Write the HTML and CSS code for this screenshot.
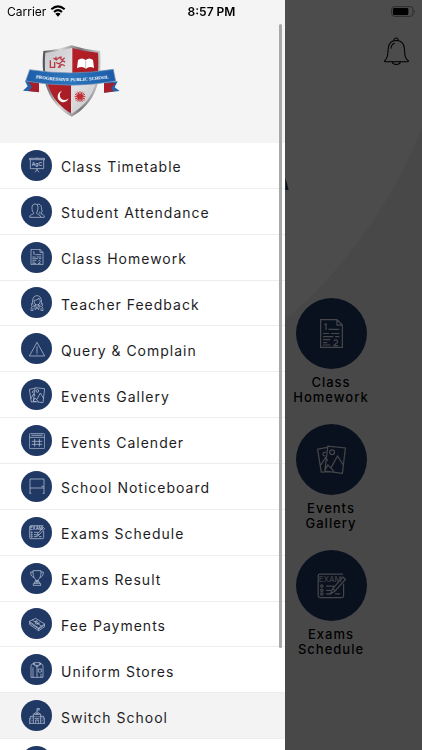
FILE: index.html
```html
<!DOCTYPE html>
<html lang="en">
<head>
<meta charset="utf-8">
<meta name="viewport" content="width=device-width, initial-scale=1">
<title>Progressive Public School</title>
<link rel="stylesheet" href="styles.css">
</head>
<body>
<svg class="sprite" aria-hidden="true">
  <symbol id="timetable" viewBox="0 0 48 48"><path d="M1 4h46v4H1zM4 8v27h40V8M24 35v4M24 38l-6 8M24 38l6 8M24 1v3"/><text x="24" y="27" font-size="15" text-anchor="middle">AgC</text></symbol>
  <symbol id="students" viewBox="0 0 48 48"><path d="M2 43c0-7 3-7 10-10 3-1 2-4 0-6-3-4-3-9-3-14 0-6 4-10 9-10s9 4 9 10c0 6-1 10-3 14-2 3-2 5 1 6 6 3 10 4 10 10zM24 5c3-2 6-2 9 0 6 3 3 12 6 19 1 3-1 4-3 4-1 3 0 4 3 5 5 2 7 5 7 10H35M32 26c-2 3-1 5 2 7"/></symbol>
  <symbol id="homework" viewBox="0 0 48 48"><path d="M6 1h27l9 9v37H6zM33 1v9h9M19 17h18M10 24h10M23 24h14M10 29h17M30 29h7M10 34h12M10 39h7M10 43h12"/><path d="M12 10l3-2v10M28 37c1-4 7-3 6 1 0 2-5 3-6 6h7"/></symbol>
  <symbol id="teacher" viewBox="0 0 48 48"><path d="M12 29C9 23 9 2 24 2s15 21 12 27M15 16c6 0 13-3 15-7 0 5 2 7 4 8-1 9-5 13-10 13s-9-5-9-14zM19 28v5l5 5 5-5v-5M19 31l-9 4c-4 2-4 7-4 12h6V39M29 31l9 4c4 2 4 7 4 12h-6V39M17 34l2 10 5-6 5 6 2-10M9 24c-3 4 0 8-2 10M39 24c3 4 0 8 2 10"/></symbol>
  <symbol id="alert" viewBox="0 0 48 48"><path d="M24 4L1 45h46zM24 16v20M24 38v3"/></symbol>
  <symbol id="gallery" viewBox="0 0 48 48"><path d="M18 2l29 3-5 42-29-4zM17 4L1 7l6 38 14-1M13 42l5-9 5 5 11-20 10 16M23 38l5 6M5 35l9-14 4 5"/><circle cx="25" cy="12" r="4"/><path d="M15 12c-6-2-7 7-1 6"/></symbol>
  <symbol id="calendar" viewBox="0 0 48 48"><path d="M4 2h40q3 0 3 3v39q0 3-3 3H4q-3 0-3-3V5q0-3 3-3zM1 13h46M7 7h34M17 18v23M31 18v23M8 25h32M8 34h32"/></symbol>
  <symbol id="notice" viewBox="0 0 48 48"><path d="M3 3h42v27H3zM3 30v15M45 30v15M1 46h6M41 46h6M37 25h7"/></symbol>
  <symbol id="exam" viewBox="0 0 48 48"><path d="M35 44H5q-3 0-3-3V8q0-3 3-3h38M44 21v20q0 3-3 3h-7M15 25h13M15 32h8M15 38h6M30 38h8M22 38l4-9 17-19 4 4-17 19zM26 29l4 4"/><circle cx="8" cy="25" r="2"/><circle cx="8" cy="32" r="2"/><circle cx="8" cy="38" r="2"/><text x="22" y="19" font-size="13" text-anchor="middle">EXAM</text></symbol>
  <symbol id="trophy" viewBox="0 0 48 48"><path d="M12 2h24c0 16-3 24-9 27v7h-6v-7C15 26 12 18 12 2zM12 6H5c0 11 4 15 10 16M36 6h7c0 11-4 15-10 16M16 36h16v5h3v6H13v-6h3zM16 41h16M19 32h10"/></symbol>
  <symbol id="money" viewBox="0 0 48 48"><path d="M1 16L20 7l27 17-18 12zM1 16v9l28 19 18-12v-8M1 20l28 19 18-12M10 12l27 18M18 17l6-4M25 25l8-5M29 36v8"/><circle cx="23" cy="20" r="4"/></symbol>
  <symbol id="uniform" viewBox="0 0 48 48"><path d="M15 4c-7 2-9 4-9 10v32h36V14c0-6-2-8-9-10M15 2h18l-3 8H18zM18 10l-6-3 3-5M30 10l6-3-3-5M24 11v35M12 16v30M36 35v11M20 14h8M28 21h9v8q-4 4-9 0z"/></symbol>
  <symbol id="school" viewBox="0 0 48 48"><path d="M24 11V1h7v5h-7M13 46V19l11-8 11 8v27M1 47h46M13 25H4v6H1v16M35 25h9v6h3v16M13 19h22M20 46V36h8v10M18 24v4M24 24v4M30 24v4M17 32h14M5 34v3M9 29v3M5 41v3M9 37v3M39 29v3M43 34v3M39 37v3M43 41v3"/><circle cx="24" cy="17" r="2"/></symbol>
</svg>

<main class="home">
  <button class="bell" aria-label="Notifications">
    <svg viewBox="0 0 72 80"><path d="M2 68c10-8 9-18 10-34C13 20 20 10 35 10s23 10 24 24c1 16 0 26 11 34q1 3-2 3H4q-4 0-2-3zM29 11c-2-11 14-11 12 0M24 72c2 9 21 9 23 0M20 33c1-9 5-14 11-15"/></svg>
  </button>
  <svg class="crest-edge" viewBox="0 0 9 33" aria-hidden="true"><path d="M0 0l4 13 5 20H0z"/></svg>
  <nav class="tiles" aria-label="Shortcuts">
    <a class="tile" href="#"><span class="disc disc-large"><svg><use href="#homework"/></svg></span><span class="tile-label">Class<br>Homework</span></a>
    <a class="tile" href="#"><span class="disc disc-large"><svg><use href="#gallery"/></svg></span><span class="tile-label">Events<br>Gallery</span></a>
    <a class="tile" href="#"><span class="disc disc-large"><svg><use href="#exam"/></svg></span><span class="tile-label">Exams<br>Schedule</span></a>
  </nav>
</main>

<div class="scrim"></div>

<aside class="drawer">
  <header class="drawer-head">
    <svg class="logo" viewBox="60 129 309 225" role="img" aria-label="Progressive Public School">
      <defs>
        <linearGradient id="red" x1="0" y1="0" x2="1" y2="1"><stop offset="0" stop-color="#c9232d"/><stop offset="1" stop-color="#8f1820"/></linearGradient>
        <linearGradient id="silver" x1="0" y1="0" x2="1" y2="1"><stop offset="0" stop-color="#c3c3c7"/><stop offset=".5" stop-color="#e6e6e9"/><stop offset="1" stop-color="#bcbcc0"/></linearGradient>
        <linearGradient id="rim"><stop offset="0" stop-color="#4f4f53"/><stop offset=".3" stop-color="#d9d9d9"/><stop offset=".65" stop-color="#77777b"/><stop offset="1" stop-color="#c9c9cc"/></linearGradient>
        <linearGradient id="ribbon"><stop offset="0" stop-color="#1e5ea8"/><stop offset=".5" stop-color="#2c76bd"/><stop offset="1" stop-color="#1a5ba7"/></linearGradient>
        <clipPath id="shield"><path d="M136 158Q179 154 215 144Q251 154 294 158C302 236 281 305 215 341C149 305 128 236 136 158z"/></clipPath>
      </defs>
      <path fill="url(#rim)" d="M130 153Q179 148 215 136Q251 148 300 153C309 239 286 312 215 350C144 312 121 239 130 153z"/>
      <g clip-path="url(#shield)">
        <path fill="url(#silver)" d="M120 130h95v110h-95zM215 240h95v115h-95z"/>
        <path fill="url(#red)" d="M215 130h95v110h-95zM120 240h95v115h-95z"/>
        <path stroke="#ddd" stroke-width="4" d="M215 140v205"/>
      </g>
      <path class="script" d="M151 181v21h13v-16M160 174l9 6 9-8 8 8 8-7M169 187q7 8 14 0t12 0M174 203q12-15 20-5M168 170v9M183 169v5M180 193v11"/>
      <path fill="#fff" d="M234 180q12-9 23 0 11-9 22 0l3 24q-14-7-24 2-12-9-27-1z"/><path stroke="#b5a6a6" stroke-width="2" d="M257 181v23"/>
      <path fill="#f2f2f2" d="M186 273a17 17 0 1 0 20 22 15 15 0 1 1-20-22z"/>
      <path stroke="#c22b31" stroke-width="3" d="M240 274v32M224 290h32M228 278l24 24M252 278l-24 24M233 275l14 30M247 275l-14 30M225 283l30 14M225 297l30-14"/><circle cx="240" cy="290" r="8" fill="#c22b31"/>
      <path fill="#2463a8" d="M75 243l40 3 2 30-48-4 14-13zM353 244l-41 4 1 30 46-5-15-11z"/>
      <path fill="#a71e2b" d="M85 246l32 3v28l-31-4 10-13zM347 249l-35 1v28l30-4-9-10z"/>
      <path fill="url(#ribbon)" stroke="#7892b5" stroke-width="2" d="M89 209Q215 229 340 208l7 35Q215 268 77 243z"/>
      <path id="motto-line" fill="none" d="M88 231Q215 256 346 231"/>
      <text class="motto"><textPath href="#motto-line" startOffset="50%">PROGRESSIVE PUBLIC SCHOOL</textPath></text>
    </svg>
  </header>
  <nav class="menu" aria-label="Main menu">
    <a href="#"><span class="disc"><svg><use href="#timetable"/></svg></span><span class="label">Class Timetable</span></a>
    <a href="#"><span class="disc"><svg><use href="#students"/></svg></span><span class="label">Student Attendance</span></a>
    <a href="#"><span class="disc"><svg><use href="#homework"/></svg></span><span class="label">Class Homework</span></a>
    <a href="#"><span class="disc"><svg><use href="#teacher"/></svg></span><span class="label">Teacher Feedback</span></a>
    <a href="#"><span class="disc"><svg><use href="#alert"/></svg></span><span class="label">Query &amp; Complain</span></a>
    <a href="#"><span class="disc"><svg><use href="#gallery"/></svg></span><span class="label">Events Gallery</span></a>
    <a href="#"><span class="disc"><svg><use href="#calendar"/></svg></span><span class="label">Events Calender</span></a>
    <a href="#"><span class="disc"><svg><use href="#notice"/></svg></span><span class="label">School Noticeboard</span></a>
    <a href="#"><span class="disc"><svg><use href="#exam"/></svg></span><span class="label">Exams Schedule</span></a>
    <a href="#"><span class="disc"><svg><use href="#trophy"/></svg></span><span class="label">Exams Result</span></a>
    <a href="#"><span class="disc"><svg><use href="#money"/></svg></span><span class="label">Fee Payments</span></a>
    <a href="#"><span class="disc"><svg><use href="#uniform"/></svg></span><span class="label">Uniform Stores</span></a>
    <a href="#" class="active"><span class="disc"><svg><use href="#school"/></svg></span><span class="label">Switch School</span></a>
    <a href="#"><span class="disc"></span></a>
  </nav>
  <span class="scroll-thumb"></span>
</aside>

<div class="status">
  <span class="carrier">Carrier
    <svg class="wifi" viewBox="0 0 48 36" aria-hidden="true"><path d="M4 13Q24-5 44 13M12 21q12-11 24 0"/><path class="dot" d="M16 26q8-6 16 0l-8 9z"/></svg>
  </span>
  <span class="time">8:57 PM</span>
  <svg class="battery" viewBox="0 0 75 33" aria-hidden="true"><rect class="case" x="2" y="2" width="64" height="29" rx="8"/><rect x="6" y="6" width="46" height="21" rx="4"/><path class="tip" d="M70 11q5 5 0 11z"/></svg>
</div>
</body>
</html>
```

FILE: styles.css
```css
* { box-sizing: border-box; }

body {
  margin: 0;
  min-height: 100vh;
  overflow: hidden;
  font-family: Inter, "Open Sans", sans-serif;
  color: #1d1d1f;
}

a { color: inherit; text-decoration: none; }

.sprite { display: none; }

/* Home screen behind the drawer */
.home {
  display: flex;
  flex-direction: column;
  align-items: flex-end;
  min-height: 100vh;
  padding-top: 37px;
  background: radial-gradient(circle at -33px -51px, #fff 488px, #f2f2f2 489px);
}

.bell {
  margin: 0 13px 0 0;
  padding: 0;
  border: 0;
  background: none;
  line-height: 0;
}

.bell svg {
  width: 25px;
  height: 28px;
  fill: none;
  stroke: #000;
  stroke-width: 3;
}

.crest-edge {
  position: absolute;
  left: calc(67% + 2px);
  top: 178px;
  width: 4px;
  height: 12px;
  fill: #1f3b5c;
}

.tiles {
  display: grid;
  gap: 19px;
  width: 120px;
  margin: 233px 31px 0 0;
}

.tile {
  display: flex;
  flex-direction: column;
  align-items: center;
  gap: 6px;
}

.tile-label {
  font-size: 13px;
  font-weight: 500;
  line-height: 15px;
  letter-spacing: 1px;
  text-align: center;
  color: #000;
}

/* Round icons */
.disc {
  display: flex;
  align-items: center;
  justify-content: center;
  flex: none;
  width: 31px;
  height: 31px;
  border-radius: 50%;
  background: #203864;
}

.disc svg {
  width: 16px;
  height: 16px;
  fill: none;
  stroke: #c9d2e2;
  stroke-width: 2;
}

.sprite text {
  fill: #c9d2e2;
  stroke: none;
  font-weight: 500;
}

.disc-large { width: 71px; height: 71px; }

.disc-large svg { width: 29px; height: 29px; stroke: #e8ecf4; }

.scrim {
  position: fixed;
  inset: 0;
  background: rgba(0, 0, 0, 0.7);
}

/* Drawer */
.drawer {
  position: fixed;
  inset: 0 auto 0 0;
  width: 68%;
  max-width: 285px;
  overflow: hidden;
  background: #fff;
}

.drawer-head {
  padding: 43px 20px 25px;
  background: #f4f4f4;
  line-height: 0;
}

.logo { width: 103px; height: 75px; }

.script { fill: none; stroke: #b83b43; stroke-width: 4; }

.motto {
  fill: #fff;
  font-family: "Liberation Serif", serif;
  font-size: 14px;
  font-weight: bold;
  text-anchor: middle;
}

.menu {
  display: grid;
  grid-auto-rows: 1fr;
  height: 642px;
}

.menu a {
  display: flex;
  align-items: center;
  gap: 9px;
  padding-left: 21px;
  border-bottom: 1px solid #ededed;
}

.menu .active { background: #f3f3f3; }

.label {
  padding-top: 4px;
  font-size: 14px;
  line-height: 20px;
  letter-spacing: 1px;
}

.scroll-thumb {
  position: absolute;
  top: 24px;
  right: 3px;
  width: 3px;
  height: 624px;
  border-radius: 2px;
  background: #a8a8a8;
}

/* Status bar */
.status {
  position: fixed;
  inset: 0 0 auto;
  display: grid;
  grid-template-columns: 1fr auto 1fr;
  align-items: center;
  height: 22px;
  padding: 0 6px 0 7px;
  font-size: 12px;
  color: #000;
}

.carrier { display: flex; align-items: center; gap: 4px; }

.wifi { width: 16px; height: 12px; fill: none; stroke: #000; stroke-width: 6; }

.wifi .dot { fill: #000; stroke: none; }

.time { font-weight: 600; }

.battery { justify-self: end; width: 25px; height: 11px; }

.battery .case { fill: none; stroke: #2b2b2b; stroke-width: 3; }

.battery .tip { fill: #2b2b2b; }
```
